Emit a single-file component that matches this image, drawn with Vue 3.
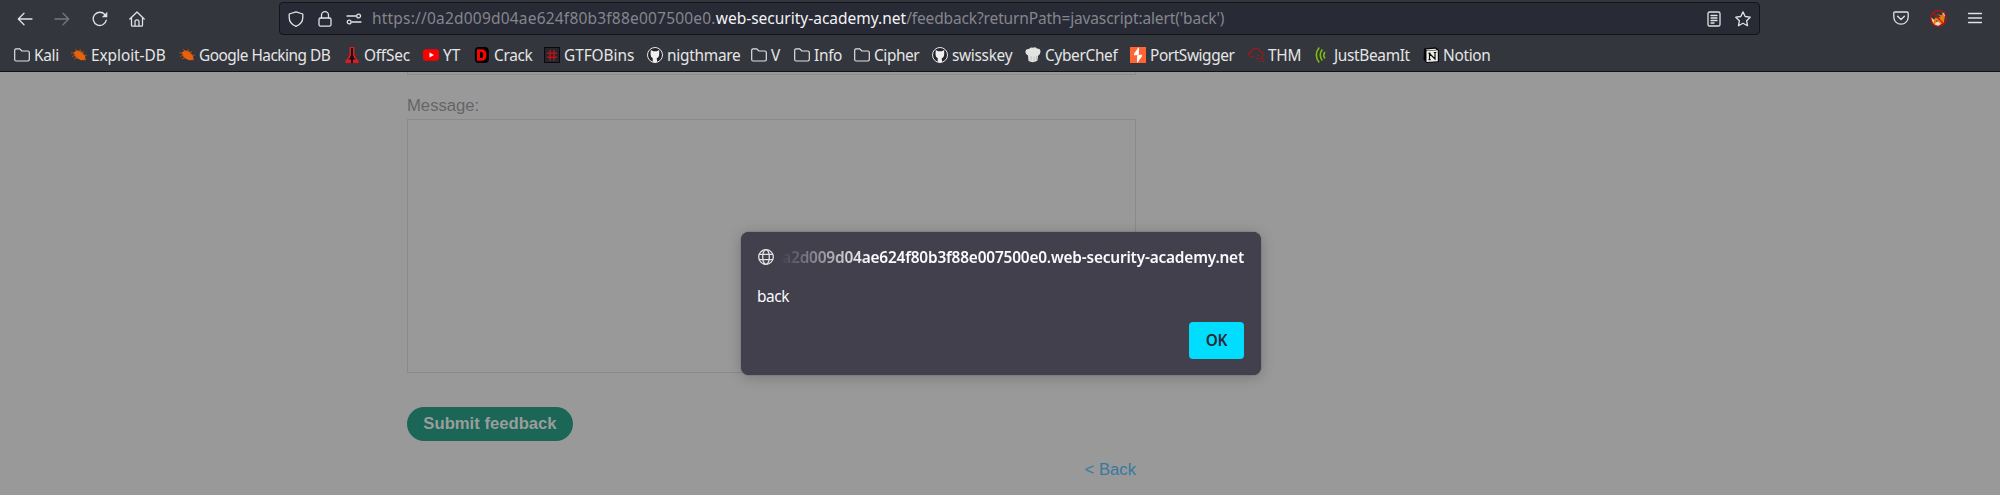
<script setup>
const bookmarks = [
  { icon: 'folder', label: 'Kali', width: 57, tracking: -0.3 },
  { icon: 'bug', label: 'Exploit-DB', width: 108, tracking: -0.05 },
  { icon: 'bug', label: 'Google Hacking DB', width: 165, tracking: -0.5 },
  { icon: 'offsec', label: 'OffSec', width: 79, tracking: -0.22 },
  { icon: 'youtube', label: 'YT', width: 51, tracking: 0 },
  { icon: 'crack', label: 'Crack', width: 70, tracking: -0.3 },
  { icon: 'hash', label: 'GTFOBins', width: 103, tracking: -0.05 },
  { icon: 'github', label: 'nigthmare', width: 104, tracking: -0.25 },
  { icon: 'folder', label: 'V', width: 43, tracking: 0 },
  { icon: 'folder', label: 'Info', width: 60, tracking: -0.3 },
  { icon: 'folder', label: 'Cipher', width: 78, tracking: -0.4 },
  { icon: 'github', label: 'swisskey', width: 93, tracking: -0.3 },
  { icon: 'chef', label: 'CyberChef', width: 105, tracking: -0.32 },
  { icon: 'swigger', label: 'PortSwigger', width: 118, tracking: -0.42 },
  { icon: 'cloud', label: 'THM', width: 66, tracking: -0.2 },
  { icon: 'beam', label: 'JustBeamIt', width: 109, tracking: -0.33 },
  { icon: 'notion', label: 'Notion', width: 80, tracking: -0.3 },
]
</script>

<template>
  <div class="window">
    <header class="chrome">
      <div class="toolbar">
        <nav class="nav">
          <svg class="ico" viewBox="0 0 16 16"><path d="M15 8H1.500M7 2.300 1.300 8 7 13.700" /></svg>
          <svg class="ico dim" viewBox="0 0 16 16"><path d="M1 8h13.500M9 2.300 14.700 8 9 13.700" /></svg>
          <svg class="ico" viewBox="0 0 16 16"><path d="M14.300 9.200A6.600 6.600 0 1 1 12.800 3.500" /><path class="fill" d="M15.300.8v5.500H9.800z" /></svg>
          <svg class="ico" viewBox="0 0 16 16"><path d="M.8 8 8 1l7.200 7M2.500 6.700v7.500q0 1 1 1h9q1 0 1-1V6.700M6 15v-4.200a2 2 0 0 1 4 0V15" /></svg>
        </nav>
        <div class="urlbar">
          <svg class="ico shield" viewBox="0 0 16 16"><path d="M8 .8 14.800 3v3.500c0 4-2.700 7.200-6.800 8.900C3.900 13.700 1.200 10.500 1.200 6.500V3z" /></svg>
          <svg class="ico lock" viewBox="0 0 16 16"><rect x="2" y="7" width="12" height="8.200" rx="1.600" /><path d="M4.500 7V4.200a3.500 3.500 0 0 1 7 0V7" /></svg>
          <svg class="ico perms" viewBox="0 0 16 16"><path d="M1 5h9M6 11h9" /><circle cx="12.600" cy="5" r="1.900" /><circle cx="3.200" cy="11" r="1.900" /></svg>
          <span class="url"><span class="sub">https://0a2d009d04ae624f80b3f88e007500e0.</span><b>web-security-academy.net</b><span class="path">/feedback?returnPath=javascript:alert('back')</span></span>
          <svg class="ico reader" viewBox="0 0 16 16"><rect x="2" y="1" width="12" height="14" rx="1.600" /><path d="M5 4.500h6M5 7h6M5 9.500h6M5 12h3" /></svg>
          <svg class="ico star" viewBox="0 0 16 16"><path d="m8 .9 2.200 4.600 5 .7-3.600 3.500.9 5L8 12.300l-4.500 2.400.9-5L.8 6.200l5-.7z" /></svg>
        </div>
        <div class="actions">
          <svg class="ico" viewBox="0 0 16 16"><path d="M2 2h12q1.200 0 1.200 1.200V7a7.200 7.200 0 0 1-14.400 0V3.200Q.8 2 2 2zM4.600 6.200 8 9.500l3.400-3.300" /></svg>
          <svg class="fox" viewBox="0 0 16 16">
            <path d="M1 7l3 2 3-5 4 1 2-3 1 4-1 6-5 3-5-1z" fill="#e67d12" /><path d="m11 2 3 .5V6zM1 7l3 3-1 2zM5 12l3-1 2 2-2 2-3-.500z" fill="#e0ddda" /><path d="M4 6.500 7 4l3 2-3 2z" fill="#3a3d47" /><path d="m8 8 1.500 1M6 10l1 .5" stroke="#52331d" />
            <circle cx="8" cy="8" r="7.400" fill="none" stroke="#c80d0d" /><path d="m3 2.800 10 10.400" stroke="#c80d0d" />
          </svg>
          <svg class="ico menu" viewBox="0 0 16 16"><path d="M1.500 3.500h13M1.500 8h13M1.500 12.500h13" /></svg>
        </div>
      </div>
      <div class="bookmarks">
        <div v-for="b in bookmarks" :key="b.label" class="bookmark" :style="{ width: b.width + 'px', letterSpacing: b.tracking + 'px' }">
          <svg class="mark" viewBox="0 0 16 16">
            <g v-if="b.icon === 'folder'" class="line"><path d="M.7 3.200q0-1.400 1.400-1.400h3.600L7.800 4h6q1.500 0 1.500 1.400v7.200q0 1.400-1.400 1.400H2.100Q.7 14 .7 12.600z" /></g>
            <g v-else-if="b.icon === 'bug'"><path d="M2.500 5.800 6 3.200l4.500 1.600 3.500 4 .5 4-4.500.500-5-2.500z" fill="#e8620d" /><path d="M4 2.200 7 5M9 2l.5 4M0 6h4M1 9.500 5 8M12.500 4 11 7.500M13 8.500l3-.5M3 12l4-2M12 13l3-.500" stroke="#c95312" stroke-width=".8" /></g>
            <g v-else-if="b.icon === 'offsec'"><path d="M5.500 0h5v7l1.500 4 2.500 2.500V16h-13v-2.500L4 11l1.500-4z" fill="#e01c22" /><path d="M7 1h2v6l1 4-1 2v3H7v-3l-1-2 1-4z" fill="#170d10" /><path d="M4.500 12h7" stroke="#170d10" /></g>
            <g v-else-if="b.icon === 'youtube'"><rect y="2.300" width="16" height="11.500" rx="3" fill="#f00" /><path d="m6.500 5.500 4.500 2.500-4.500 2.500z" fill="#fff" /></g>
            <g v-else-if="b.icon === 'crack'"><rect x=".8" width="14" height="16" rx="4" fill="#000" /><path d="M3 2.200h4.500q5 0 5 5.800t-5 5.800H3zM6 5v6h1.200q2 0 2-3t-2-3z" fill="#f00" fill-rule="evenodd" /></g>
            <g v-else-if="b.icon === 'hash'"><rect x=".5" y=".5" width="15" height="15" fill="#24262c" stroke="#090a0c" /><path d="M6.200 3v10.500M10 3v10.500M3 6.200h10M3 10.300h10" stroke="#b4141b" stroke-width="1.500" /></g>
            <g v-else-if="b.icon === 'github'"><circle cx="8" cy="8" r="7.500" fill="#24262e" stroke="#e8e8ea" /><path d="M3.800 3 6.300 4.300h3.400L12.200 3v4q0 3.500-2.500 4.200l.5 3.500-2 .8-2.500-.8V11Q3.500 10 3.500 7.200z" fill="#f1f0ee" /></g>
            <g v-else-if="b.icon === 'chef'"><path d="M3.500 14 3 8.500Q0 7 .5 4.200T4 2q1.500-2 4-1.300Q10-.5 12 1.500q3.500 0 3.500 3T13 9l-.5 4.500Q8 16.500 3.500 14z" fill="#e2e2e1" /><path d="M6 9v5M9 9.500v5M11.500 9v4" stroke="#b3b4b6" stroke-width=".7" /></g>
            <g v-else-if="b.icon === 'swigger'"><path d="M0 0h16v16H0z" fill="#ff6633" /><path d="M8.800 0 4 6.700v1.600h4.500zM7.200 16 12 9.300V7.700H7.500z" fill="#fff" /><path d="M8.300 1v6M7.700 9v6" stroke="#fff" /></g>
            <g v-else-if="b.icon === 'cloud'" stroke="#a3171e" fill="none" stroke-width="1.200"><path d="M7 10H3Q.8 9.500.8 7.300T3.500 4.800q.5-3.500 4-3.500t4.300 3.200Q15 5 15 7.500T13 10M9 8.500h2M8 11.500h3M12.500 12H16M10 14h2M14 14.500h2" /></g>
            <g v-else-if="b.icon === 'beam'" stroke="#7fbd12" fill="none" stroke-width="1.600"><path d="M5.200.5Q-.5 8 5.200 15.500M8.300 2.500Q4.200 8 8.300 13.500M11 5Q8.500 8 11 11.500" /></g>
            <g v-else><path d="M1 1.500 12.500.2 16 3v12L3.500 16 .5 12.500z" fill="#070707" /><path d="M3.500 4 14.800 3.300v11L3.500 15zM2.800 2.500l9.400-.8 1.500 1-9.700.7z" fill="#eeedea" /><path d="M6.500 12.500v-6L12 12V5.500M5.500 6.300h2.200M10.800 5.500h2.500M5.500 12.700h2.200" fill="none" stroke="#0a0a0a" stroke-width="1.200" /></g>
          </svg>
          <span class="name">{{ b.label }}</span>
        </div>
      </div>
    </header>

    <main class="page">
      <form class="form">
        <div class="input-end"></div>
        <label class="label">Message:</label>
        <div class="textarea"></div>
        <button class="submit" type="button">Submit feedback</button>
        <a class="back">&lt; Back</a>
      </form>
    </main>

    <section class="dialog">
      <div class="origin">
        <svg class="ico" viewBox="0 0 16 16"><circle cx="8" cy="8" r="7.300" /><ellipse cx="8" cy="8" rx="3.300" ry="7.300" /><path d="M1.500 5.300h13M1.500 10.700h13" /></svg>
        <div class="host"><span>a2d009d04ae624f80b3f88e007500e0.web-security-academy.net</span></div>
      </div>
      <p class="message">back</p>
      <button class="ok" type="button">OK</button>
    </section>
  </div>
</template>

<style>
body { margin: 0; background: #99999a; }
</style>

<style scoped>
* { box-sizing: border-box; }
.window { position: relative; width: 2000px; height: 495px; overflow: hidden; background: #99999a; font: 15.400px/20px "Noto Sans", sans-serif; }
.chrome { height: 72px; background: #33363d; border-bottom: 1px solid #121317; color: #e6e6e7; }
.toolbar { display: flex; height: 37px; padding-top: 2px; }
.ico { width: 16px; height: 16px; flex: none; fill: none; stroke: #e2e2e4; stroke-width: 1.3; stroke-linecap: round; stroke-linejoin: round; }
.fill { fill: #e2e2e4; stroke: none; }
.dim { stroke: #75777c; }
.nav { display: flex; gap: 21.300px; width: 279px; padding: 9px 0 0 17px; }
.urlbar { display: flex; align-items: center; width: 1481px; height: 33px; padding: 0 8px; border: 1px solid #131419; border-radius: 4px; background: #282a36; }
.shield { margin-right: 13px; }
.lock { margin-right: 13px; }
.perms { margin-right: 10px; }
.url { flex: 1; margin-bottom: 1px; font-size: 15.500px; color: #85868d; white-space: nowrap; }
.url b { font-weight: 400; color: #f4f4f5; }
.sub { letter-spacing: .2px; }
.path { letter-spacing: -.14px; }
.reader { margin-right: 13px; }
.actions { display: flex; gap: 21px; padding: 8px 0 0 132.500px; }
.fox { width: 17px; height: 17px; fill: none; }
.menu { margin-left: -1px; }
.bookmarks { display: flex; padding: 8px 0 0 14px; }
.bookmark { display: flex; align-items: center; flex: none; gap: 4px; height: 20px; white-space: nowrap; }
.name { padding-top: 2px; }
.mark { width: 16px; height: 16px; flex: none; fill: none; }
.line { fill: none; stroke: #e2e2e4; stroke-width: 1.2; }
.form { display: flex; flex-direction: column; width: 729px; margin-left: 407px; font: 16.670px/20px "Liberation Sans", Arial, sans-serif; }
.input-end { height: 3px; border: 1px solid #8a8a8b; border-top: 0; }
.label { margin-top: 21px; color: #656567; }
.textarea { height: 254px; margin-top: 3px; border: 1px solid #8a8a8b; }
.submit { width: 166px; height: 34px; margin-top: 34px; padding: 0; border: 0; border-radius: 17px; background: #1b6657; color: #9a9d9c; font: bold 16.670px/20px "Liberation Sans", Arial, sans-serif; }
.back { align-self: flex-end; margin-top: 19px; color: #36799f; }
.dialog { position: absolute; left: 741px; top: 232px; display: flex; flex-direction: column; width: 520px; height: 143px; padding: 15px 16px 16px; border-radius: 8px; background: #42404d; box-shadow: 0 2px 14px rgba(0, 0, 0, .22), 0 0 1px #333; color: #fbfbfe; }
.origin { display: flex; align-items: center; gap: 6px; height: 20px; padding: 0 1px; }
.host { display: flex; justify-content: flex-end; flex: 1; padding-top: 2px; overflow: hidden; font-weight: 600; letter-spacing: -.18px; white-space: nowrap; mask-image: linear-gradient(to right, transparent, #000 90px); }
.message { margin: 20px 0 0; letter-spacing: -.4px; }
.ok { align-self: flex-end; width: 55px; height: 37px; margin: 15px 1px 0 0; padding: 0; border: 0; border-radius: 4px; background: #00ddff; color: #2b2a33; font: 600 15.400px/20px "Noto Sans", sans-serif; letter-spacing: -.3px; }
</style>
